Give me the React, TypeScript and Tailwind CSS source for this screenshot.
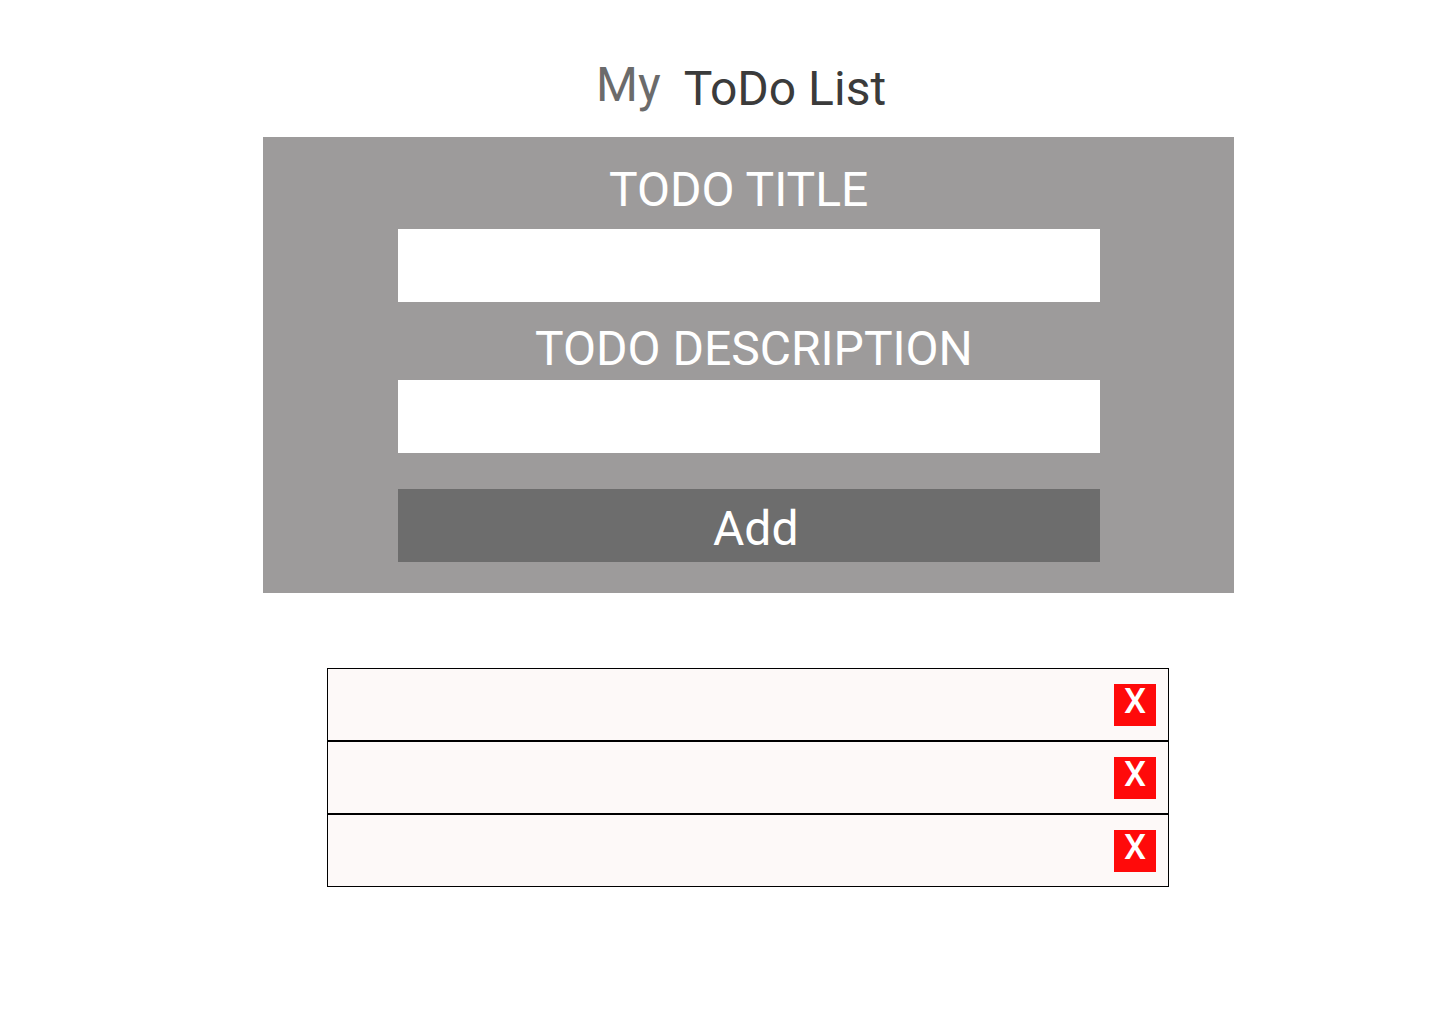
import React from "react";

export default function App() {
  const rows = [0, 1, 2];
  return (
    <div className="min-h-[1024px] w-[1440px] bg-white" style={{ fontFamily: "Roboto, 'Noto Sans', sans-serif" }}>
      <div className="flex items-start h-[137px]">
        <span className="ml-[596px] mt-[61px] text-[48px] leading-[48px] text-[#6b6b6b]">My</span>
        <span className="ml-[23px] mt-[65px] text-[48px] leading-[48px] text-[#3b3b3b]">ToDo List</span>
      </div>
      <div className="ml-[263px] w-[971px] h-[456px] bg-[#9d9b9b] flex flex-col pt-[29px]">
        <div className="text-white text-[48px] leading-[48px] ml-[346px]">TODO TITLE</div>
        <input className="ml-[135px] mt-[15px] w-[702px] h-[73px] bg-white outline-none" />
        <div className="text-white text-[48px] leading-[48px] ml-[272px] mt-[23px]">TODO DESCRIPTION</div>
        <input className="ml-[135px] mt-[7px] w-[702px] h-[73px] bg-white outline-none" />
        <button className="ml-[135px] mt-[36px] w-[702px] h-[73px] bg-[#6d6d6d] text-white text-[48px] leading-[66px] pt-[7px] flex justify-start">
          <span className="ml-[315px]">Add</span>
        </button>
      </div>
      <div className="ml-[327px] mt-[75px] w-[842px] flex flex-col">
        {rows.map((r) => (
          <div key={r} className="h-[73px] border border-black bg-[#fdf9f8] flex items-center justify-end pr-[12px]">
            <button className="w-[42px] h-[42px] bg-[#ff0a0a] text-white text-[35px] font-medium leading-[36px] pb-[6px] flex items-center justify-center">
              X
            </button>
          </div>
        ))}
      </div>
    </div>
  );
}
